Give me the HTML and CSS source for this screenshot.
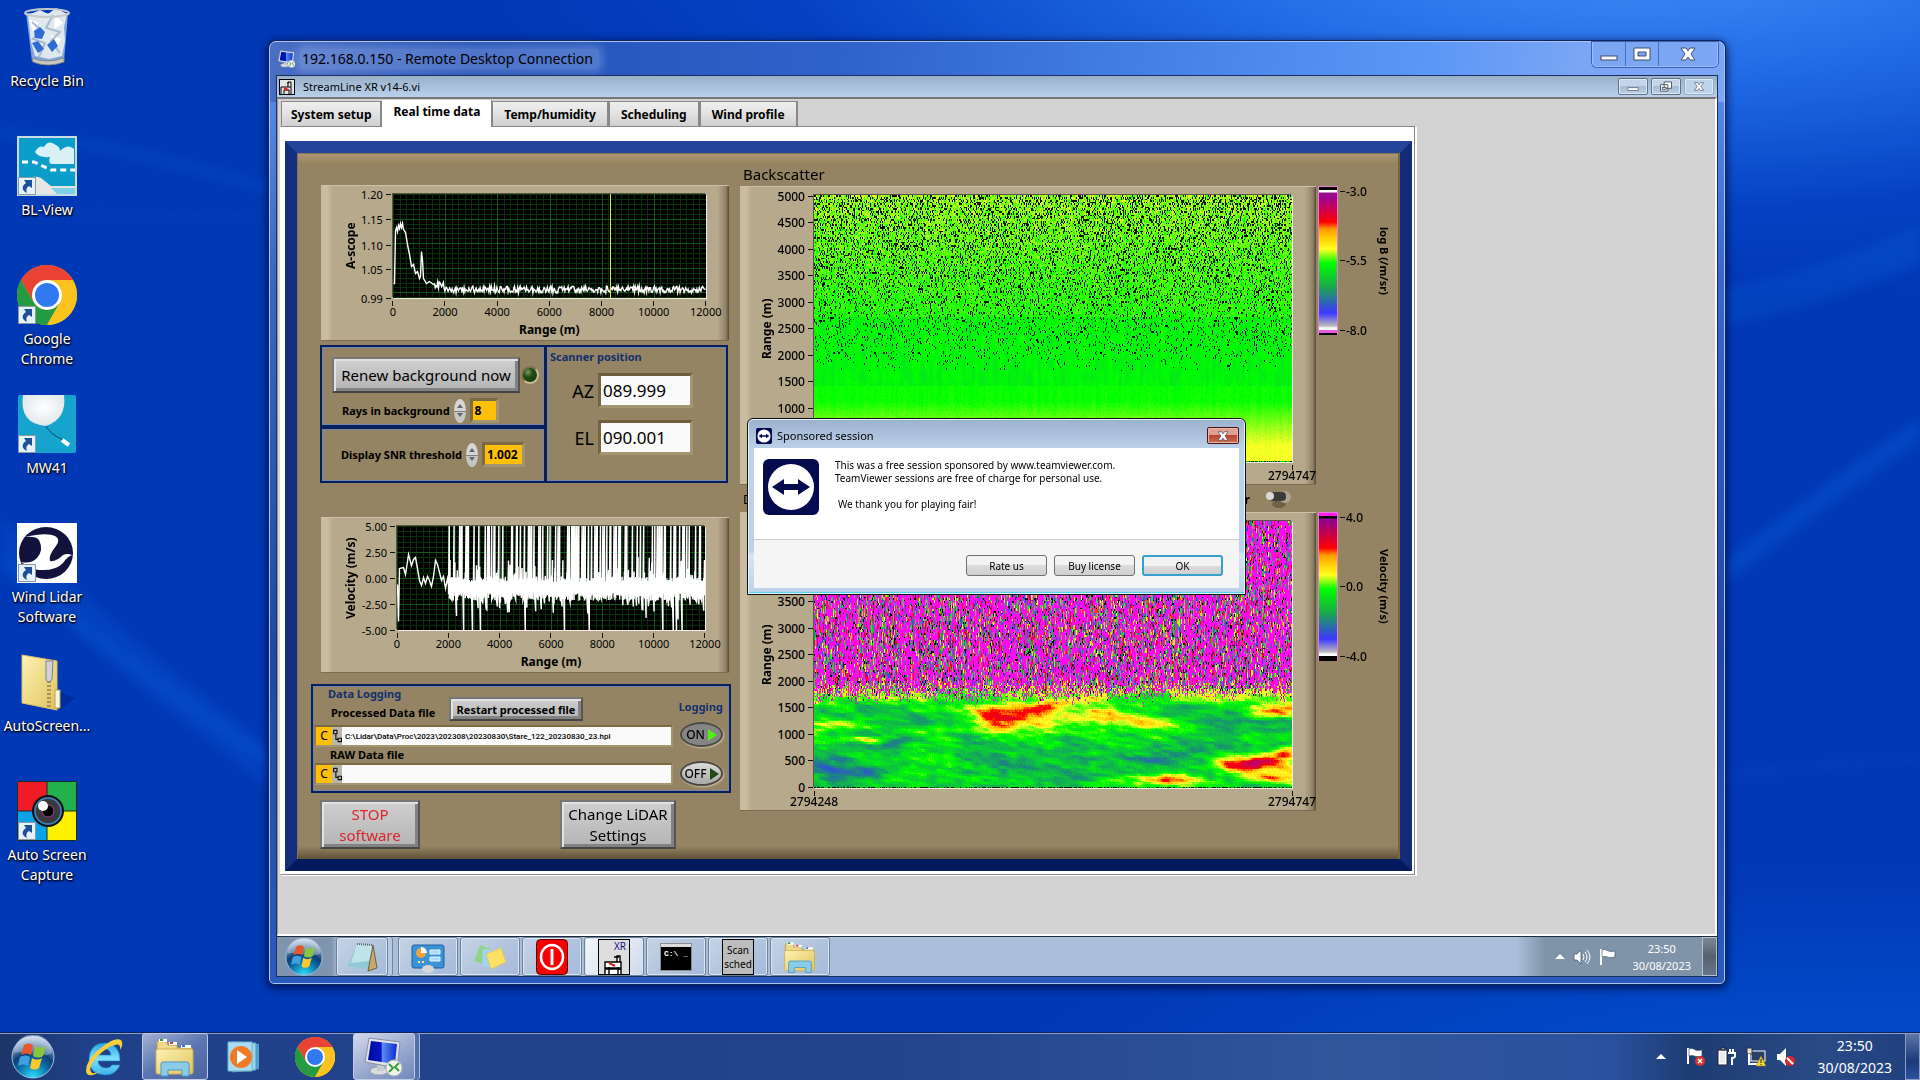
FILE: index.html
```html
<!DOCTYPE html>
<html lang="en">
<head>
<meta charset="utf-8">
<title>192.168.0.150 - Remote Desktop Connection</title>
<meta name="viewport" content="width=device-width, initial-scale=1">
<link rel="stylesheet" href="styles.css">
</head>
<body>
<svg class="defs" aria-hidden="true">
  <defs>
    <linearGradient id="folderFill" x1="0" y1="0" x2="1" y2="1"><stop offset="0" stop-color="#fdf3b4"/><stop offset="1" stop-color="#e0c25c"/></linearGradient>
    <radialGradient id="orbFill" cx=".5" cy="1" r="1"><stop offset="0" stop-color="#2fe3ff"/><stop offset=".4" stop-color="#0a6da8"/><stop offset=".6" stop-color="#0c3f78"/><stop offset="1" stop-color="#c9dcec"/></radialGradient>
    <linearGradient id="screenFill" x1="0" y1="0" x2="1" y2="0"><stop offset="0" stop-color="#000a9c"/><stop offset=".45" stop-color="#0417c4"/><stop offset=".5" stop-color="#5b8bf0"/><stop offset="1" stop-color="#0a2bd0"/></linearGradient>
    <radialGradient id="balloonFill" cx=".5" cy=".4" r=".6"><stop offset="0" stop-color="#fff"/><stop offset="1" stop-color="#dfe6ea"/></radialGradient>
    <linearGradient id="ieFill" x1="0" y1="0" x2="0" y2="1"><stop offset="0" stop-color="#2aa5e6"/><stop offset=".5" stop-color="#7fe0fb"/><stop offset="1" stop-color="#38b4ec"/></linearGradient>
  </defs>
  <symbol id="shortcut" viewBox="0 0 18 18">
    <rect x=".5" y=".5" width="17" height="17" fill="#e3f1f8" stroke="#8b98a6"/>
    <path d="M6 3h8v8l-3-2c-3 2-3 4-2 7-5-2-6-7-1-10z" fill="#1d4f96"/>
  </symbol>
  <symbol id="chrome" viewBox="0 0 60 60">
    <circle cx="30" cy="30" r="30" fill="#fbc116"/>
    <path d="M4 15A30 30 0 0 1 56 15H30L17 38z" fill="#ea4335"/>
    <path d="M4 15A30 30 0 0 0 30 60L43 37 17 38z" fill="#249a41"/>
    <path d="M56 15A30 30 0 0 1 30 60L43 38 44 20 30 15z" fill="#fcc31e"/>
    <circle cx="30" cy="30" r="15" fill="#fff"/><circle cx="30" cy="30" r="12" fill="#3079ee"/>
  </symbol>
  <symbol id="orb" viewBox="0 0 44 44">
    <circle cx="22" cy="22" r="21" fill="url(#orbFill)" stroke="#9fc0dc"/>
    <path d="M3 18a19 19 0 0 1 38 0c-10 6-26-3-38 0z" fill="#fff" opacity=".3"/>
    <path d="M13 10c3-2 6-2 9 0l-2 10c-3-2-6-2-10 0z" fill="#e8562a"/>
    <path d="M24 11c3 2 7 2 11 0l-3 10c-3 2-7 2-10 0z" fill="#8ac53e"/>
    <path d="M9 22c4-2 7-2 10 0l-2 9c-3-2-6-2-10 0z" fill="#3f9fe0"/>
    <path d="M21 23c3 2 7 2 10 0l-3 10c-3 2-6 2-9 0z" fill="#fbc72c"/>
  </symbol>
  <symbol id="explorer" viewBox="0 0 42 40">
    <path d="M3 4h9l2 4h8l2 3h14v8H3z" fill="#efd986" stroke="#b89b4a"/>
    <rect x="5" y="2" width="8" height="3" fill="#fff"/><rect x="6" y="2" width="3" height="2" fill="#2d9a3c"/>
    <rect x="15" y="5" width="8" height="3" fill="#fff"/><rect x="16" y="5" width="3" height="2" fill="#d9352a"/>
    <rect x="27" y="8" width="10" height="3" fill="#fff"/><rect x="28" y="8" width="3" height="2" fill="#2b7dc4"/>
    <rect x="2" y="12" width="37" height="25" rx="2" fill="url(#folderFill)" stroke="#cfae52"/>
    <path d="M7 39V27q0-2 2-2h24q2 0 2 2v12h-7v-6H14v6z" fill="#8ccbe8" stroke="#4a97c0"/>
  </symbol>
  <symbol id="rdp" viewBox="0 0 40 40">
    <ellipse cx="15" cy="34" rx="9" ry="4" fill="#d9dde2" stroke="#9aa0a8"/>
    <path d="M13 27h7l1 7h-8z" fill="#c6cbd2"/>
    <path d="M5 1 36 5 33 31 1 25z" fill="#dfe4ec" stroke="#8890a0"/>
    <path d="M7 4 33 7 31 27 4 23z" fill="url(#screenFill)"/>
    <circle cx="30" cy="31" r="8" fill="#f2f2ee" stroke="#b5b5ad"/>
    <path d="M25 27l4 4-4 4M35 26l-4 4 4 4" fill="none" stroke="#3c9b3c" stroke-width="2"/>
  </symbol>
  <symbol id="rig" viewBox="0 0 16 16">
    <rect x=".5" y=".5" width="15" height="15" fill="#e4e4e4" stroke="#000"/>
    <path d="M2 15V8h10v7M5 15v-4h5v4M9 8V3h3v5M8 4h2" fill="none" stroke="#000"/><path d="M5 9l4 2" stroke="#d22" stroke-width="2"/>
  </symbol>
  <symbol id="tv" viewBox="0 0 56 56">
    <rect width="56" height="56" rx="6" fill="#060b50"/><circle cx="28" cy="28" r="23" fill="#fff"/>
    <path d="M9 28l12-8v5h14v-5l12 8-12 8v-5H21v5z" fill="#060b50"/>
  </symbol>
  <symbol id="min" viewBox="0 0 18 14"><rect x="1" y="9" width="16" height="4" fill="#fff" stroke="#3f4d68"/></symbol>
  <symbol id="max" viewBox="0 0 18 14"><path d="M1 1h16v12H1zM5 5v4h8V5z" fill="#fff" fill-rule="evenodd" stroke="#3f4d68"/></symbol>
  <symbol id="close" viewBox="0 0 16 14"><path d="M1 1h5l2 3 2-3h5l-4 6 4 6h-5l-2-3-2 3H1l4-6z" fill="#fff" stroke="#46506a"/></symbol>
  <symbol id="restore" viewBox="0 0 14 12"><path d="M5 1h8v7H5zM1 4h8v7H1z" fill="#fff" stroke="#4b5666"/><rect x="3" y="7" width="4" height="2" fill="#fff" stroke="#4b5666"/></symbol>
  <symbol id="flag" viewBox="0 0 18 18"><path d="M2 1v16" stroke="#fff" stroke-width="2"/><path d="M3 2c5-2 5 3 13 1v6c-8 2-8-2-13 0z" fill="#fff" stroke="#38465a" stroke-width=".6"/></symbol>
</svg>

<div class="desktop">
  <main class="workspace">
    <svg class="streaks" viewBox="0 0 1920 1033" preserveAspectRatio="none" aria-hidden="true">
      <g fill="none" stroke="#0c62dc">
        <path d="M-20 520Q120 660 300 790" stroke-width="34" opacity=".24"/>
        <path d="M-20 545Q120 665 300 780" stroke-width="10" opacity=".25"/>
        <path d="M0 134Q120 142 290 196" stroke-width="12" opacity=".2"/>
        <path d="M60 212Q180 218 290 214" stroke-width="4" opacity=".25"/>
        <path d="M1710 310Q1820 290 1930 240" stroke-width="36" opacity=".25"/>
        <path d="M1700 592Q1820 500 1930 424" stroke-width="24" opacity=".2"/>
        <path d="M1700 590Q1820 496 1930 420" stroke-width="7" opacity=".35"/>
        <path d="M1710 779Q1820 765 1930 757" stroke-width="4" opacity=".3"/>
      </g>
    </svg>

    <nav class="shortcuts" aria-label="Desktop icons">
      <a href="#bin"><svg viewBox="0 0 60 60">
        <path d="M9 6 51 6 47 54Q30 62 15 54z" fill="#7fa5dd"/>
        <path d="M11 8l12-5 8 4 8-6 11 6-3 13 1 14-3 15-13 3-14-3-4-14z" fill="#dfe8ef"/>
        <path d="M12 12l10 4-6 9zM38 8l8 8-9 6zM34 28l10 4-6 12z" fill="#fff"/>
        <path d="M15 15l9 8-8 9 12 4-6 14M36 8l-7 13 14 4-9 9 9 12" fill="none" stroke="#a9bccb" stroke-width="2"/>
        <path d="M17 24l6-4 5 5-3 7-7-1zM30 38l7-6 4 7-6 6zM15 36l6-2 6 8-6 4z" fill="#2f6bd4"/>
        <path d="M15 51q15 6 32 0v4q-16 6-31 0z" fill="#c9c9c4" stroke="#85857e"/>
        <ellipse cx="30" cy="6" rx="22" ry="4" fill="none" stroke="#c5c9c9" stroke-width="2"/></svg>Recycle Bin</a>
      <a href="#blview"><svg viewBox="0 0 60 60">
        <rect width="60" height="60" fill="#c9dbe2"/><rect x="2" y="2" width="56" height="56" fill="#0a9dc9"/>
        <path d="M18 16q4-7 9-5 4-8 12-2 4 2 4 6 8-8 14-2v15H34q-3-2-1-7-12 1-15-5z" fill="#d9f1f4"/>
        <path d="M5 26h12l17 8h24" fill="none" stroke="#fff" stroke-width="3" stroke-dasharray="6 4"/>
        <path d="M2 46q14-8 22-4l10 8h24v8H2z" fill="#e6e6e4"/><path d="M34 52h24v6H40z" fill="#7fd2e6"/>
        <use href="#shortcut" x="1" y="41" width="18" height="18"/></svg>BL-View</a>
      <a href="#chrome-app"><svg viewBox="0 0 60 60"><use href="#chrome" width="60" height="60"/><use href="#shortcut" x="1" y="41" width="18" height="18"/></svg>Google Chrome</a>
      <a href="#mw41"><svg viewBox="0 0 60 60">
        <rect x="1" y="1" width="58" height="58" rx="2" fill="#16a3cd"/><path d="M6 1h41q3 24-18 31Q2 30 6 1z" fill="url(#balloonFill)"/>
        <path d="M29 32q4 8 17 14" fill="none" stroke="#0a4c66"/><path d="M45 46l7 5" stroke="#fff" stroke-width="4"/>
        <use href="#shortcut" x="1" y="41" width="18" height="18"/></svg>MW41</a>
      <a href="#lidar"><svg viewBox="0 0 60 60">
        <rect width="60" height="60" fill="#fff"/><ellipse cx="29" cy="30" rx="27" ry="26" fill="#12123c"/>
        <path d="M8 14q22-5 30-1 6 3 1 10-8 10-6 15 6 1 13-6 4-2 9 0-4 1-9 8-7 8-24 7-8-1-18-8 10 2 16-4 7-8 2-18-3-4-14-3z" fill="#fff"/>
        <use href="#shortcut" x="1" y="41" width="18" height="18"/></svg>Wind Lidar Software</a>
      <a href="#zip"><svg viewBox="0 0 60 60">
        <path d="M43 58 58 46 43 40z" fill="#02268a" opacity=".6"/>
        <path d="M5 3 40 9V58L5 51z" fill="url(#folderFill)" stroke="#d9c067"/><path d="M38 38l5 0v18h-5z" fill="#f5f5ea" stroke="#b9a24e"/>
        <path d="M32 9v47" stroke="#a8935a" stroke-width="4" stroke-dasharray="2 2"/><path d="M29 9h7l-1 18q-3 5-6 1z" fill="#cfd3d6" stroke="#7c8186"/></svg>AutoScreen...</a>
      <a href="#capture"><svg viewBox="0 0 60 60">
        <rect width="30" height="30" fill="#ee1c24"/><rect x="30" width="30" height="30" fill="#22b14c"/><rect y="30" width="30" height="30" fill="#0aa2e8"/><rect x="30" y="30" width="30" height="30" fill="#fff200"/>
        <path d="M.5.5h59v59H.5zM30 0v60M0 30h60" fill="none" stroke="#1d2b24"/>
        <circle cx="31" cy="30" r="15" fill="#3a3a3c" stroke="#111" stroke-width="2"/><circle cx="31" cy="30" r="13" fill="none" stroke="#3b86c8" stroke-width="1.5"/><circle cx="31" cy="30" r="6" fill="#000" stroke="#a33f9a"/><circle cx="26" cy="25" r="5" fill="#fff"/>
        <use href="#shortcut" x="1" y="41" width="18" height="18"/></svg>Auto Screen Capture</a>
    </nav>

    <section class="window" aria-label="Remote Desktop Connection">
      <header class="window-title">
        <svg class="title-icon" viewBox="0 0 40 40"><use href="#rdp"/></svg>
        <h1>192.168.0.150 - Remote Desktop Connection</h1>
        <div class="caption-buttons">
          <button type="button" aria-label="Minimize"><svg width="18" height="14"><use href="#min"/></svg></button>
          <button type="button" aria-label="Maximize"><svg width="18" height="14"><use href="#max"/></svg></button>
          <button type="button" class="wide" aria-label="Close"><svg width="16" height="14"><use href="#close"/></svg></button>
        </div>
      </header>

      <div class="remote">
        <header class="app-title">
          <svg width="16" height="16"><use href="#rig"/></svg>
          <h2>StreamLine XR v14-6.vi</h2>
          <div class="app-buttons">
            <button type="button" aria-label="Minimize"><svg width="12" height="9"><use href="#min"/></svg></button>
            <button type="button" aria-label="Restore"><svg width="14" height="11"><use href="#restore"/></svg></button>
            <button type="button" class="faded" aria-label="Close"><svg width="12" height="9"><use href="#close"/></svg></button>
          </div>
        </header>

        <div class="app-body">
          <div class="tab-control">
            <div class="tabs" role="tablist">
              <button type="button" role="tab">System setup</button>
              <button type="button" role="tab" aria-selected="true">Real time data</button>
              <button type="button" role="tab">Temp/humidity</button>
              <button type="button" role="tab">Scheduling</button>
              <button type="button" role="tab">Wind profile</button>
            </div>
            <div class="tab-page">
              <div class="panel">
                <div class="left-column">
                  <figure class="chart">
                    <figcaption class="y-label">A-scope</figcaption>
                    <ul class="y-axis y-ascope"><li>1.20</li><li>1.15</li><li>1.10</li><li>1.05</li><li>0.99</li></ul>
                    <canvas id="ascope" width="313" height="104"></canvas>
                    <ul class="x-axis"><li>0</li><li>2000</li><li>4000</li><li>6000</li><li>8000</li><li>10000</li><li>12000</li></ul>
                    <p class="x-label">Range (m)</p>
                  </figure>

                  <div class="scanner">
                    <div class="cell background-cell">
                      <div class="row"><button type="button" class="lv-button renew">Renew background now</button><span class="led"></span></div>
                      <div class="row field-row"><label for="rays">Rays in background</label><span class="spin"></span><input id="rays" class="lv-num rays" value="8"></div>
                    </div>
                    <div class="cell snr-cell">
                      <div class="row field-row"><label for="snr">Display SNR threshold</label><span class="spin"></span><input id="snr" class="lv-num snr" value="1.002"></div>
                    </div>
                    <div class="cell position-cell">
                      <h3>Scanner position</h3>
                      <div class="row"><label for="az">AZ</label><input id="az" class="lv-read" value="089.999" readonly></div>
                      <div class="row"><label for="el">EL</label><input id="el" class="lv-read" value="090.001" readonly></div>
                    </div>
                  </div>

                  <figure class="chart">
                    <figcaption class="y-label">Velocity (m/s)</figcaption>
                    <ul class="y-axis"><li>5.00</li><li>2.50</li><li>0.00</li><li>-2.50</li><li>-5.00</li></ul>
                    <canvas id="velocity" width="308" height="104"></canvas>
                    <ul class="x-axis"><li>0</li><li>2000</li><li>4000</li><li>6000</li><li>8000</li><li>10000</li><li>12000</li></ul>
                    <p class="x-label">Range (m)</p>
                  </figure>

                  <div class="logging">
                    <div class="log-files">
                      <h3>Data Logging</h3>
                      <label class="proc-label" for="proc">Processed Data file</label>
                      <button type="button" class="lv-button restart">Restart processed file</button>
                      <div class="path"><span class="drive">C</span><svg viewBox="0 0 8 16"><path d="M1 3h3v3H1zM5 10h3v3H5zM3 6v5h2" fill="none" stroke="#111"/></svg><input id="proc" value="C:\Lidar\Data\Proc\2023\202308\20230830\Stare_122_20230830_23.hpl"></div>
                      <label class="raw-label" for="raw">RAW Data file</label>
                      <div class="path"><span class="drive">C</span><svg viewBox="0 0 8 16"><path d="M1 3h3v3H1zM5 10h3v3H5zM3 6v5h2" fill="none" stroke="#111"/></svg><input id="raw" value=""></div>
                    </div>
                    <div class="log-switches">
                      <h3>Logging</h3>
                      <button type="button" class="oval on" aria-pressed="true">ON<i></i></button>
                      <button type="button" class="oval" aria-pressed="false">OFF<i></i></button>
                    </div>
                  </div>

                  <div class="actions">
                    <button type="button" class="lv-button stop">STOP<br>software</button>
                    <button type="button" class="lv-button change">Change LiDAR<br>Settings</button>
                  </div>
                </div>

                <div class="right-column">
                  <h3 class="map-title">Backscatter</h3>
                  <div class="map-row">
                    <figure class="chart map">
                      <figcaption class="y-label">Range (m)</figcaption>
                      <ul class="y-axis"><li>5000</li><li>4500</li><li>4000</li><li>3500</li><li>3000</li><li>2500</li><li>2000</li><li>1500</li><li>1000</li><li></li><li></li></ul>
                      <canvas id="backscatter" width="478" height="267"></canvas>
                      <ul class="x-axis"><li></li><li>2794747</li></ul>
                    </figure>
                    <div class="scale">
                      <div class="ramp ramp-b"></div>
                      <ul class="ramp-axis"><li>-3.0</li><li>-5.5</li><li>-8.0</li></ul>
                      <p>log B (/m/sr)</p>
                    </div>
                  </div>
                  <div class="map-title doppler"><span>D</span><span class="mode">r</span>
                    <svg width="28" height="18" viewBox="0 0 28 18"><ellipse cx="15" cy="14" rx="7" ry="4" fill="#6f6248"/><circle cx="21" cy="7" r="6" fill="#aaa598"/><rect x="5" y="2" width="17" height="9" rx="4" fill="#3b3b39"/><circle cx="6" cy="6" r="4" fill="#d9d9d5"/></svg>
                  </div>
                  <div class="map-row">
                    <figure class="chart map">
                      <figcaption class="y-label">Range (m)</figcaption>
                      <ul class="y-axis"><li></li><li></li><li></li><li>3500</li><li>3000</li><li>2500</li><li>2000</li><li>1500</li><li>1000</li><li>500</li><li>0</li></ul>
                      <canvas id="doppler" width="478" height="267"></canvas>
                      <ul class="x-axis"><li>2794248</li><li>2794747</li></ul>
                    </figure>
                    <div class="scale">
                      <div class="ramp ramp-v"></div>
                      <ul class="ramp-axis"><li>4.0</li><li>0.0</li><li>-4.0</li></ul>
                      <p>Velocity (m/s)</p>
                    </div>
                  </div>
                </div>
              </div>
            </div>
          </div>
        </div>

        <footer class="remote-taskbar">
          <button type="button" class="start" aria-label="Start"><svg width="38" height="38"><use href="#orb"/></svg></button>
          <button type="button" class="task stacked" aria-label="Notepad"><svg width="32" height="32" viewBox="0 0 32 32"><path d="M11 3 27 4 22 28 2 25z" fill="#8fcbd6"/><path d="M11 3 27 4 23 20 5 22z" fill="#bfe4ea"/><path d="M27 4 31 27 22 30z" fill="#c7a96a" stroke="#6d6040"/><path d="M11 3 27 4" stroke="#666" stroke-width="2" stroke-dasharray="1 1"/></svg></button>
          <button type="button" class="task" aria-label="Control Panel"><svg width="34" height="32" viewBox="0 0 34 32"><rect x="1" y="4" width="32" height="23" rx="2" fill="#3a92d8" stroke="#1f5e9e"/><circle cx="10" cy="12" r="5" fill="#f5a13a"/><path d="M10 12V6a6 6 0 0 1 6 6z" fill="#fff"/><path d="M19 9h10v4H19zM19 16h10v4H19z" fill="#a6dbf7" stroke="#e8f6ff"/><path d="M7 21h8" stroke="#ffe27a" stroke-width="2" stroke-dasharray="2 2"/><ellipse cx="17" cy="28" rx="6" ry="4" fill="#d5d8da"/></svg></button>
          <button type="button" class="task" aria-label="Sticky Notes"><svg width="34" height="32" viewBox="0 0 34 32"><path d="M7 4 20 9 14 24 1 20z" fill="#8fd488"/><path d="M10 8 22 9 22 26 9 25z" fill="#a6d3f3"/><path d="M13 13 28 7 33 21 18 28z" fill="#fbe063" stroke="#e0c040" stroke-width=".6"/></svg></button>
          <button type="button" class="task" aria-label="Shutdown tool"><svg width="32" height="36" viewBox="0 0 32 36"><rect x=".5" y=".5" width="31" height="35" rx="4" fill="#f40000" stroke="#5c0000"/><ellipse cx="16" cy="18" rx="11" ry="12" fill="none" stroke="#fff" stroke-width="2.5"/><path d="M16 10v16" stroke="#fff" stroke-width="3"/></svg></button>
          <button type="button" class="task active" aria-label="StreamLine XR"><svg width="32" height="36" viewBox="0 0 32 36"><rect x=".5" y=".5" width="31" height="35" fill="#dedede" stroke="#000"/><text x="16" y="11" class="xr">XR</text><path d="M7 35v-6h16v6M7 23h16v7H7zM19 23v-6h3v6M16 18h5M11 35v-7M20 35v-7" fill="#fff" stroke="#000" stroke-width="1.4"/><path d="M11 24l6 3" stroke="#d22" stroke-width="2"/></svg></button>
          <button type="button" class="task" aria-label="Command Prompt"><svg width="32" height="28" viewBox="0 0 32 28"><rect x=".5" y=".5" width="31" height="27" fill="#000" stroke="#8d8d8d"/><rect x="1" y="1" width="30" height="3" fill="#dcdcdc"/><text x="4" y="13" class="prompt">C:\ _</text></svg></button>
          <button type="button" class="task" aria-label="Scan schedule"><span class="scan">Scan<br>sched</span></button>
          <button type="button" class="task" aria-label="Explorer"><svg width="34" height="34"><use href="#explorer"/></svg></button>
          <div class="tray">
            <svg width="10" height="6" viewBox="0 0 10 6"><path d="M5 0l5 5H0z" fill="#fff"/></svg>
            <svg width="18" height="16" viewBox="0 0 18 16"><path d="M1 5h3l4-4v14l-4-4H1z" fill="#fff" stroke="#4a5a6c" stroke-width=".8"/><path d="M10 5q2 3 0 6M12 3q4 5 0 10M14 1q6 7 0 14" fill="none" stroke="#fff"/></svg>
            <svg width="18" height="18"><use href="#flag"/></svg>
            <time datetime="2023-08-30T23:50">23:50<br>30/08/2023</time>
            <button type="button" class="peek" aria-label="Show desktop"></button>
          </div>
        </footer>

        <section class="dialog" role="dialog" aria-label="Sponsored session">
          <header>
            <svg width="16" height="16"><use href="#tv"/></svg>
            <h2>Sponsored session</h2>
            <button type="button" class="dialog-close" aria-label="Close"><svg width="12" height="10"><use href="#close"/></svg></button>
          </header>
          <div class="dialog-content">
            <div class="dialog-message">
              <svg width="56" height="56"><use href="#tv"/></svg>
              <div><p>This was a free session sponsored by www.teamviewer.com.<br>TeamViewer sessions are free of charge for personal use.</p><p class="thanks">We thank you for playing fair!</p></div>
            </div>
            <div class="dialog-buttons">
              <button type="button">Rate us</button><button type="button">Buy license</button><button type="button" class="default">OK</button>
            </div>
          </div>
        </section>
      </div>
    </section>
  </main>

  <footer class="taskbar">
    <button type="button" class="start" aria-label="Start"><svg width="44" height="44"><use href="#orb"/></svg></button>
    <button type="button" class="task ie" aria-label="Internet Explorer"><svg width="40" height="40" viewBox="0 0 40 40"><path d="M36 24H14q1 7 8 7 4 0 6-3h8q-4 10-15 10Q5 37 5 22 6 6 21 6q15 1 15 18zM14 18h13q-1-6-6-6-6 0-7 6z" fill="url(#ieFill)" stroke="#1b86c9" stroke-width=".6"/><path d="M3 37Q-1 29 12 15 30-1 37 3q3 4-1 10 1-7-5-5Q22 10 12 21 3 32 8 36q4 1 9-3-9 8-14 4z" fill="#f6cf3a"/></svg></button>
    <button type="button" class="task open" aria-label="File Explorer"><svg width="42" height="40"><use href="#explorer"/></svg></button>
    <button type="button" class="task media" aria-label="Media Player"><svg width="34" height="34" viewBox="0 0 34 34"><path d="M8 2l24 2v25l-24 3z" fill="#4fa4cc"/><path d="M5 2l24 1v27l-24 2z" fill="#9bd5ec" stroke="#4a95bb"/><path d="M1 2h24v29H1z" fill="#a9dcf0" stroke="#6db3d2"/><circle cx="14" cy="17" r="11" fill="#f07a26"/><path d="M10 10v14l10-7z" fill="#fff"/></svg></button>
    <button type="button" class="task browser" aria-label="Chrome"><svg width="40" height="40"><use href="#chrome"/></svg></button>
    <button type="button" class="task open bright" aria-label="Remote Desktop"><svg width="40" height="40"><use href="#rdp"/></svg></button>
    <div class="tray">
      <svg width="10" height="6" viewBox="0 0 10 6"><path d="M5 0l5 5H0z" fill="#fff"/></svg>
      <svg width="20" height="20" viewBox="0 0 20 20"><use href="#flag" width="18" height="18"/><circle cx="14" cy="14" r="5" fill="#d8352c"/><path d="M12 12l4 4M16 12l-4 4" stroke="#fff" stroke-width="1.5"/></svg>
      <svg width="20" height="20" viewBox="0 0 20 20"><path d="M2 3h9v15H2zM5 1h4v2H5z" fill="#fff" stroke="#223"/><rect x="4" y="5" width="5" height="11" fill="#e8ecf2"/><path d="M12 6h7v3q0 2-3 2v7M14 6V2M17 6V2" fill="none" stroke="#fff" stroke-width="2"/></svg>
      <svg width="20" height="20" viewBox="0 0 20 20"><rect x="5" y="4" width="14" height="10" fill="#2a3f66" stroke="#fff"/><path d="M1 1h5v6H1z" fill="#ddd" stroke="#333"/><path d="M3 7v10h9" fill="none" stroke="#fff" stroke-width="2"/><path d="M15 9l5 10H10z" fill="#f7d928" stroke="#8c7a10" stroke-width=".5"/><path d="M15 12v4M15 17v1" stroke="#222"/></svg>
      <svg width="20" height="20" viewBox="0 0 20 20"><path d="M1 7h3l6-6v18l-6-6H1z" fill="#fff"/><circle cx="14" cy="14" r="5" fill="#d8252c"/><path d="M11 11l6 6" stroke="#fff" stroke-width="2"/></svg>
      <time datetime="2023-08-30T23:50">23:50<br>30/08/2023</time>
      <button type="button" class="peek" aria-label="Show desktop"></button>
    </div>
  </footer>
</div>
<script src="plots.js"></script>
</body>
</html>
```
FILE: styles.css
```css
* { box-sizing: border-box; margin: 0; padding: 0; }
body { font-family: "Noto Sans", "Open Sans", sans-serif; font-size: 12px; color: #000; background: #0138b5; overflow: hidden; }
button, input { font: inherit; color: inherit; border: 0; border-radius: 0; background: none; min-width: 0; }
ul { list-style: none; }
h1, h2, h3 { font-weight: 400; font-size: 12px; }
svg { display: block; flex: none; }
.defs { position: absolute; width: 0; height: 0; }

.desktop {
  min-height: 100vh; display: flex; flex-direction: column;
  background:
    radial-gradient(ellipse 60% 34% at 85% -6%, rgba(74, 152, 255, .95), rgba(40, 118, 240, .8) 40%, rgba(10, 80, 215, .4) 75%, transparent),
    radial-gradient(ellipse 45% 24% at 96% 104%, #0354d4, transparent),
    #0138b5;
}
.workspace { position: relative; flex: 1; display: flex; }
.streaks { position: absolute; inset: 0; width: 100%; height: 100%; filter: blur(6px); }

/* Desktop icons */
.shortcuts { position: relative; display: grid; grid-auto-rows: 129px; width: 94px; padding-top: 7px; }
.shortcuts a { display: flex; flex-direction: column; align-items: center; gap: 4px; padding: 0 2px; font-size: 14px; line-height: 20px; color: #fff; text-align: center; text-decoration: none; text-shadow: 1px 1px 2px #000, 0 1px 2px #001; }
.shortcuts svg { width: 60px; height: 60px; }

/* Remote desktop window */
.window {
  position: absolute; inset: 41px 195px 48px 269px; display: flex; flex-direction: column;
  padding: 0 6px 6px; border: 1px solid #a9c3f5; border-radius: 7px 7px 5px 5px;
  background: linear-gradient(100deg, #4a6fc4 0, #2352b5 14%, #2f63cc 40%, #4583e8 62%, #5c98f6 80%, #7ba6f4 90%) top / 100% 60px no-repeat, linear-gradient(#5f93ee, #3768c8 25%, #2148a6 65%, #2a5bbf);
  box-shadow: 0 0 0 1px #10245c, 0 2px 9px 2px rgba(0, 8, 60, .75);
}
.window-title { display: flex; align-items: center; height: 33px; padding-left: 2px; flex: none; }
.title-icon { width: 18px; height: 18px; }
.window-title h1 { font-size: 14px; line-height: 20px; margin-left: 4px; padding: 0 6px 0 2px; background: rgba(190, 210, 250, .28); box-shadow: 0 0 8px 4px rgba(190, 210, 250, .28); border-radius: 4px; }
.caption-buttons { display: flex; align-self: flex-start; margin-left: auto; height: 25px; border: 1px solid #9dbdf7; border-top: 0; border-radius: 0 0 5px 5px; box-shadow: 0 0 0 1px #3d62b4; }
.caption-buttons button { width: 33px; display: grid; place-items: center; border-right: 1px solid #4a70c4; }
.caption-buttons .wide { width: 58px; border: 0; }
.remote { position: relative; flex: 1; min-height: 0; display: flex; flex-direction: column; background: #d3d3d3; border: 1px solid #1b2f5c; }
.app-title { display: flex; align-items: center; gap: 8px; height: 21px; flex: none; padding: 0 3px 0 2px; background: linear-gradient(#9ab0ca, #b9d0ea); }
.app-title h2 { font-size: 11px; }
.app-buttons { display: flex; gap: 3px; margin-left: auto; }
.app-buttons button { width: 30px; height: 17px; display: grid; place-items: center; border: 1px solid #5f7388; border-radius: 2px; background: linear-gradient(#c3d5e8 50%, #a5bcd4 50%, #bcd1e6); box-shadow: inset 0 0 0 1px #dce8f4; }
.app-buttons .faded { border-color: #93acc4; background: #bcd3ea; }

.app-body { flex: 1; min-height: 0; overflow: hidden; padding: 1px 2px; border: solid #fff; border-width: 0 2px 2px 0; border-top: 2px solid #777; border-left: 1px solid #999; }
.tab-control { width: max-content; }
.tabs { display: flex; align-items: flex-end; height: 26px; padding-left: 1px; }
.tabs button { height: 25px; padding: 0 9px; font-size: 12px; font-weight: 700; white-space: nowrap; border: 1px solid #888; border-width: 1px 2px 0 1px; background: linear-gradient(#efefef, #e2e2e2 50%, #cfcfcf); }
.tabs [aria-selected] ~ button { padding: 0 11px; }
.tabs [aria-selected] { position: relative; height: 27px; padding: 0 11px 4px; border-width: 0 1px 0 0; background: #fff; margin-bottom: -1px; }
.tab-page { padding: 14px 2px 3px 4px; border: 1px solid #888; border-left-color: #fff; background: #fff; box-shadow: 2px 1px 0 #fff; }
.panel {
  display: grid; grid-template-columns: 420px 660px; gap: 9px;
  border: 12px solid; border-color: #24439a #142c78 #041a5c #152f80; padding: 0 0 10px 14px;
  background: linear-gradient(#ad9671, #94835f 12px, transparent 13px), linear-gradient(0deg, #5e5138, #918160 12px, transparent 13px), #948463;
  box-shadow: inset 1px 1px 0 #84745a, inset -2px 0 0 #776645;
}
.left-column { padding-top: 32px; }

/* Charts */
.chart {
  display: grid; grid-template-columns: 20px 1fr auto; grid-template-rows: 104px 22px 20px;
  width: 408px; height: 156px; margin-left: 10px; padding: 8px 24px 0 20px;
  border-top: 1px solid #cdc0a4; border-bottom: 1px solid #7c6d50;
  background: linear-gradient(90deg, #c9bb9e, #cbbd9f 6px, transparent 12px), linear-gradient(270deg, #54493a, #8e8064 3px, #a79a7e 8px, transparent 12px), #b6a98c;
}
.chart canvas { display: block; grid-area: 1 / 3; box-shadow: 1px 1px 0 #f3ede0, -1px -1px 0 #5b5544; }
.y-label, .scale p { writing-mode: vertical-rl; font-weight: 700; text-align: center; line-height: 20px; white-space: nowrap; }
.y-label { grid-area: 1 / 1; transform: rotate(180deg); }
.y-axis { grid-area: 1 / 2; display: grid; align-content: space-between; justify-content: end; padding-right: 2px; font-size: 11px; }
.y-axis li, .ramp-axis li { height: 0; display: flex; align-items: center; justify-content: flex-end; gap: 3px; white-space: nowrap; }
.y-axis li::after, .ramp-axis li::before { content: ""; width: 5px; height: 1px; background: #111; }
.y-axis li:empty::after { background: none; }
.y-ascope { grid-template-rows: 25px 25px 24px 28px 0; }
.x-axis { grid-area: 2 / 3; display: flex; justify-content: space-between; padding-top: 3px; font-size: 11px; line-height: 12px; }
.x-axis li { width: 0; display: flex; flex-direction: column; align-items: center; }
.x-axis li::before { content: ""; flex: none; width: 1px; height: 5px; background: #111; }
.x-label { grid-area: 3 / 3; text-align: center; font-weight: 700; line-height: 20px; }

/* Background and scanner controls */
.scanner { display: grid; grid-template: 82px 56px / 226px 182px; margin: 4px 0 34px 9px; }
.cell { border: 2px solid #06205e; outline: 1px solid #7385ab; outline-offset: -3px; padding: 3px; }
.position-cell { grid-area: 1 / 2 / 3 / 3; border-left-width: 1px; }
.row { display: flex; align-items: center; }
.background-cell .row:first-child { padding: 7px 0 0 7px; gap: 1px; }
.field-row { gap: 4px; font-weight: 700; padding: 5px 0 0 17px; }
.field-row label { font-size: 11px; }
.snr-cell .field-row { padding: 10px 0 0 16px; }
.lv-button { border: 2px solid; border-color: #777 #555 #444 #777; background: linear-gradient(#cfcfcf, #b4b4b4); box-shadow: inset 2px 2px 0 #e2e2e2, inset -3px -3px 0 #828282; white-space: nowrap; }
.renew { width: 188px; height: 36px; font-size: 15px; }
.led { width: 18px; height: 18px; border-radius: 50%; border: 2px solid #7e6f4e; border-right-color: #cbbd9c; border-bottom-color: #cbbd9c; background: radial-gradient(circle at 35% 30%, #7d9a6c, #1f4f10 35%, #10330a); }
.spin { width: 12px; height: 24px; border-radius: 50%; background: linear-gradient(#d6d6d6 48%, #777 49%, #777 52%, #c6c6c6 53%); display: grid; justify-items: center; align-content: space-evenly; }
.spin::before { content: ""; border: 3px solid transparent; border-top: 0; border-bottom: 4px solid #666; }
.spin::after { content: ""; border: 3px solid transparent; border-bottom: 0; border-top: 4px solid #666; }
.lv-num { height: 25px; padding: 0 2px; border: 3px solid; border-color: #7c6a42 #a39570 #a39570 #7c6a42; background: #fdbf08; font-weight: 700; }
.rays { width: 29px; }
.snr { width: 43px; }
.position-cell h3, .logging h3 { font-weight: 700; font-size: 11px; color: #12306f; line-height: 14px; }
.position-cell .row { justify-content: flex-end; gap: 4px; padding-right: 30px; font-size: 18px; }
.position-cell h3 + .row { margin: 9px 0 12px; }
.lv-read { width: 95px; height: 35px; padding: 0 2px; font-size: 17px; background: #fafafa; border: 3px solid; border-color: #6f5e3c #a39570 #a39570 #75653f; }

/* Logging */
.logging { display: grid; grid-template-columns: 1fr 50px; height: 109px; margin-top: 11px; border: 2px solid #06205e; outline: 1px solid #7385ab; outline-offset: -3px; padding: 1px 6px 0 1px; }
.log-files { display: grid; grid-template: 14px 24px 22px 16px 22px / 130px 1fr; }
.log-files h3 { padding-left: 14px; }
.log-files label, .restart { font-size: 11px; font-weight: 700; white-space: nowrap; }
.proc-label { grid-area: 2 / 1; padding-left: 17px; line-height: 24px; }
.raw-label { grid-area: 4 / 1; padding-left: 16px; line-height: 16px; }
.restart { grid-area: 1 / 2 / 3 / 3; align-self: end; justify-self: start; width: 134px; height: 24px; margin: 0 0 4px 5px; }
.path { grid-column: 1 / 3; display: flex; border: 2px solid; border-color: #7c6a42 #a39570 #a39570 #8d7c55; }
.drive { width: 16px; background: #fdbf08; text-align: center; line-height: 18px; }
.path svg { width: 10px; height: 18px; background: #bbb7ab; }
.path input { flex: 1; background: #fafafa; font-family: Roboto, "Noto Sans", sans-serif; font-size: 8px; font-weight: 500; padding-left: 3px; }
.log-switches { padding-top: 13px; display: flex; flex-direction: column; align-items: flex-end; }
.oval { display: flex; align-items: center; justify-content: center; gap: 3px; width: 43px; height: 25px; border-radius: 50%; font-weight: 500; background: linear-gradient(#dcdcdc, #a9a9a9); border: 2px solid #4c4a44; box-shadow: 1px 1px 2px #cdbf9f; }
.oval.on { background: #858585; margin: 8px 0 14px; }
.oval i { border: 6px solid transparent; border-left: 9px solid #1e4b12; border-right: 0; }
.oval.on i { border-left-color: #4df212; }
.actions { display: flex; justify-content: space-between; margin: 7px 55px 0 9px; }
.actions button { height: 49px; font-size: 15px; line-height: 21px; }
.stop { width: 100px; color: #d8272b; }
.change { width: 116px; }

/* Heat maps */
.map-title { height: 33px; padding: 9px 0 0 3px; font-size: 15px; line-height: 24px; }
.map-row { display: flex; gap: 2px; }
.map { width: 576px; height: 299px; margin: 0; padding: 8px 24px 0 17px; grid-template-rows: 267px 22px; }
.map .y-axis, .map .x-axis, .ramp-axis { font-size: 12px; font-weight: 500; }
.map .y-axis { padding: 1px 1px 1px 0; }
.doppler { display: flex; align-items: center; height: 27px; padding: 0 0 0 3px; font-size: 13px; }
.doppler .mode { margin-left: auto; font-weight: 700; }
.doppler svg { margin: 0 108px 0 14px; }
.scale { display: grid; grid-template-columns: 20px 32px 20px; gap: 2px; height: 149px; }
.ramp { border: 1px solid #e67ad8; border-width: 1px 1px 0; }
.ramp-b { background: linear-gradient(#000 3px, #fff 3px 5px, #90108c 6px, #a6008c 12px, #f00 35px, #ff9a00 42px, #ffc800 50px, #ffff20 62px, #0f0 76px, #1aa84a 100px, #3a38ff 126px, #bbb 139px, #fff 141px 143px, #e85adc 143px 146px, #000 146px); }
.ramp-v { background: linear-gradient(#ff20f0 3px, #000 3px 5px, #8a0090 6px, #f00 35px, #ff9a00 42px, #ffc800 50px, #ffff20 62px, #0f0 76px, #1aa84a 100px, #3a38ff 126px, #bbb 139px, #fff 141px 143px, #000 143px); }
.ramp-axis { display: grid; align-content: space-between; justify-content: start; padding: 5px 0; }
.ramp-axis li { gap: 1px; justify-content: flex-start; }
.scale p { align-self: center; font-size: 11px; }

/* Dialog over the remote session */
.dialog { position: absolute; left: 470px; top: 342px; width: 499px; height: 177px; display: flex; flex-direction: column; padding: 0 6px 6px; border: 1px solid #111; border-radius: 6px 6px 0 0; background: linear-gradient(#9ab0cc, #bcd2ea 30px, #bcd2ea 75%, #d6e5f4 78%, #b9d1ea); box-shadow: inset 0 0 0 1px #e6f2fc, inset 0 -2px 0 #55d0ee; font-size: 11px; }
.dialog header { display: flex; align-items: center; gap: 5px; height: 29px; padding: 4px 0 0 2px; }
.dialog h2 { font-size: 11px; }
.dialog-close { display: grid; place-items: center; width: 32px; height: 17px; margin-left: auto; border: 1px solid #4b1410; border-radius: 2px; background: linear-gradient(#e0a094 45%, #bb4330 50%, #cf6e52); box-shadow: inset 0 0 0 1px #e9b8ac; }
.dialog-content { flex: 1; display: flex; flex-direction: column; }
.dialog-message { flex: 1; display: flex; gap: 16px; padding: 11px 9px 0; background: #fff; }
.dialog-message p { line-height: 13px; font-size: 10px; }
.dialog-message .thanks { margin: 13px 0 0 3px; }
.dialog-buttons { display: flex; justify-content: flex-end; gap: 7px; padding: 15px 16px 12px; background: #f5f5f5; border-top: 1px solid #ccc; }
.dialog-buttons button { width: 81px; height: 21px; font-size: 10px; border: 1px solid #707070; border-radius: 3px; background: linear-gradient(#f3f3f3 50%, #dcdcdc 50%, #cfcfcf); }
.dialog-buttons .default { border: 2px solid #38a0cc; }

/* Taskbars */
.remote-taskbar { display: flex; height: 40px; flex: none; border-top: 1px solid #1d2b3b; background: linear-gradient(90deg, #7f95ad 54px, #a9bfda 62px); }
.start { display: grid; place-items: center; }
.remote-taskbar .start { width: 54px; margin-right: 5px; }
.remote-taskbar .task { display: grid; place-items: center; width: 60px; margin-right: 2px; border: 1px solid #6c8099; border-radius: 3px; background: linear-gradient(135deg, #c5d3e6, #b3c6de 50%, #a5badb); box-shadow: inset 0 0 0 1px #dbe7f4; }
.remote-taskbar .stacked { width: 52px; margin-right: 10px; box-shadow: inset 0 0 0 1px #dbe7f4, 4px 0 0 #b7cae0, 5px 0 0 #7388a0; }
.remote-taskbar .active { background: linear-gradient(135deg, #f4f7fb, #cfdaea); }
.xr { font: 10px "Noto Sans", sans-serif; fill: #12128c; }
.prompt { font: 700 8px "Liberation Mono", monospace; fill: #fff; }
.scan { width: 32px; height: 36px; border: 1px solid #000; background: #bdbdbd; font-size: 10px; line-height: 14px; padding-top: 3px; }
.tray { display: flex; align-items: center; margin-left: auto; color: #fff; text-align: center; }
.remote-taskbar .tray { gap: 8px; padding-left: 38px; background: linear-gradient(90deg, rgba(127, 148, 168, 0), #7f94a8 28px); }
.remote-taskbar time { font-size: 11px; line-height: 17px; margin: 0 7px; }
.peek { align-self: stretch; width: 15px; border: 1px solid #b4c2d0; background: linear-gradient(#7b8794, #55626f 50%, #66748a); }
.remote-taskbar .peek { margin-left: -4px; }
.taskbar { position: relative; display: flex; height: 48px; border-top: 1px solid #10225a; box-shadow: inset 0 1px 0 #8ba0cc; background: linear-gradient(90deg, #1c3568, #20418a 90px, #23438c 45%, #30569c 70%, #2a519e 84%, #1d3c72 88%, #2a4a86 95%, #1e3f7d); }
.taskbar .start { width: 66px; margin-right: 5px; }
.taskbar .task { display: grid; place-items: center; width: 66px; margin-right: 3px; }
.taskbar .ie, .taskbar .media, .taskbar .browser { margin-right: 5px; }
.taskbar .open { border: 1px solid #c0cce6; border-radius: 3px; background: linear-gradient(150deg, #a3b1d3, #5b76b0 50%, #49659f); }
.taskbar .bright { width: 62px; background: linear-gradient(150deg, #d2d8ea, #93a5cc 60%, #7189bb); box-shadow: 4px 0 0 #546ea8, 5px 0 0 #a9b8da; }
.taskbar .tray { gap: 10px; }
.taskbar .tray svg:first-child { margin-right: 10px; }
.taskbar time { font-size: 14px; line-height: 22px; margin: 0 3px 0 12px; }
.taskbar .peek { border-color: #8a9fc8; background: linear-gradient(#5d76a6, #1c3a78 60%, #2b51a0); }
```
FILE: plots.js
```js
// Seeded generator, so that every load draws the same data.
function generator(seed) {
  return function () {
    seed = (seed + 0x6d2b79f5) | 0;
    let t = Math.imul(seed ^ (seed >>> 15), 1 | seed);
    t = (t + Math.imul(t ^ (t >>> 7), 61 | t)) ^ t;
    return ((t ^ (t >>> 14)) >>> 0) / 4294967296;
  };
}

function lattice(seed) {
  const rnd = generator(seed);
  const table = Array.from({ length: 4096 }, rnd);
  const at = (x, y) => table[(x * 57 + y * 131) & 4095];
  return (x, y) => {
    const xi = Math.floor(x), yi = Math.floor(y);
    let u = x - xi, v = y - yi;
    u = u * u * (3 - 2 * u);
    v = v * v * (3 - 2 * v);
    const top = at(xi, yi) * (1 - u) + at(xi + 1, yi) * u;
    const low = at(xi, yi + 1) * (1 - u) + at(xi + 1, yi + 1) * u;
    return top * (1 - v) + low * v;
  };
}

const RAMP = [
  [-4, 200, 200, 200], [-3, 58, 56, 255], [-1.6, 26, 140, 120], [0, 0, 255, 0],
  [0.9, 255, 255, 40], [1.6, 255, 195, 0], [2.3, 255, 0, 0], [4, 160, 0, 150]
];

function colour(v) {
  if (v > 4) return [255, 20, 240];
  for (let i = 1; i < RAMP.length; i++) {
    if (v <= RAMP[i][0]) {
      const a = RAMP[i - 1], b = RAMP[i];
      const t = Math.max(0, (v - a[0]) / (b[0] - a[0]));
      return [1, 2, 3].map(k => a[k] + (b[k] - a[k]) * t);
    }
  }
  return [160, 0, 150];
}

function paint(id, cell) {
  const canvas = document.getElementById(id);
  const ctx = canvas.getContext("2d");
  const img = ctx.createImageData(canvas.width, canvas.height);
  const rows = Math.ceil(canvas.height / 1.6);
  const columns = canvas.width;
  const grid = [];
  for (let r = 0; r <= rows; r++) {
    grid.push([]);
    for (let x = 0; x < columns; x++) grid[r].push(cell(x, r * 1.6));
  }
  for (let y = 0; y < canvas.height; y++) {
    for (let x = 0; x < columns; x++) {
      const c = grid[Math.floor(y / 1.6)][x];
      img.data.set([c[0], c[1], c[2], 255], (y * columns + x) * 4);
    }
  }
  ctx.putImageData(img, 0, 0);
}

const black = [0, 20, 0];

function drawBackscatter() {
  const rnd = generator(7), n = lattice(3);
  paint("backscatter", (x, y) => {
    const high = Math.max(0, 1 - y / 175);
    if (y > 264) return rnd() < 0.5 ? black : [0, 220, 0];
    if (rnd() < 0.27 * Math.pow(high, 0.6)) return black;
    let v = 0.02 + 0.5 * Math.pow(high, 1.5) + (rnd() - 0.5) * (0.12 + 0.7 * high) + (n(x / 2, y / 40) - 0.5) * 0.1;
    if (y > 120 && y < 190) v -= 0.35 * n(x / 3, y / 12);
    if (y > 205) v += Math.min(0.85, (y - 205) / 52);
    return colour(v);
  });
}

// centre x, centre y, radius x, radius y, slope, strength
const BLOBS = [
  [200, 198, 40, 14, -0.05, 2.6], [170, 190, 14, 8, 0, 1.2], [235, 185, 50, 6, -0.2, 1.3], [295, 195, 60, 13, 0.05, 1.6],
  [335, 200, 30, 7, 0.05, 1.4], [8, 202, 28, 6, 0, 1.5], [40, 217, 30, 4, 0.05, 1.1], [120, 208, 22, 4, 0, 1.1],
  [430, 243, 34, 8, 0, 3.4], [470, 232, 34, 7, -0.3, 2.1], [455, 256, 24, 5, 0.1, 1.9], [475, 246, 20, 16, 0, 1.1],
  [355, 257, 26, 6, 0, 1.9], [330, 264, 60, 8, 0, 0.8], [468, 188, 28, 7, -0.1, 2.3], [435, 180, 40, 8, 0, 0.8],
  [15, 247, 34, 10, 0.05, -1.3], [60, 250, 22, 6, 0, -1], [80, 220, 24, 5, -0.3, -1], [175, 235, 40, 6, 0.2, -0.9],
  [230, 242, 30, 5, 0.2, -0.8], [350, 235, 42, 7, 0, -1], [265, 254, 24, 5, 0, -0.7], [370, 187, 45, 7, 0, -1],
  [60, 188, 50, 5, 0, -0.3], [430, 199, 60, 3, 0, -0.8]
];

function drawDoppler() {
  const rnd = generator(21), n = lattice(11), m = lattice(5), s = lattice(17);
  const edges = Array.from({ length: 478 }, () => rnd());
  const runs = Array.from({ length: 478 }, () => ({ left: 0, c: black }));
  paint("doppler", (x, y) => {
    if (y > 264) return rnd() < 0.5 ? black : [0, 200, 0];
    const limit = 168 + edges[x] * 12 + n(x / 30, 1) * 8 - (x > 330 ? 4 : 0);
    if (y < limit && !(y > 160 && rnd() < (y - 158) / 30)) {
      const run = runs[x], column = edges[x] * 0.6 + s(x / 5, 2) * 0.4;
      if (run.left-- > 0) return run.c;
      run.left = Math.floor(rnd() * 3);
      const pick = rnd();
      if (pick < 0.14) { run.c = black; run.left = 0; }
      else if (pick < 0.2 + 0.72 * column) { run.c = [255, 10, 240]; run.left += 1; }
      else if (pick < 0.92) run.c = colour((rnd() - 0.5) * 7.5);
      else run.c = [150, 150, 130];
      return run.c;
    }
    const lean = y - x * 0.14;
    let v = -0.6 + (n(x / 26, lean / 6) - 0.5) * 1.2 + (m(x / 9, lean / 3) - 0.5) * 1.1;
    for (const [cx, cy, rx, ry, slope, strength] of BLOBS) {
      const dx = (x - cx) / rx, dy = (y - cy - (x - cx) * slope) / ry;
      v += strength * Math.exp(-(dx * dx + dy * dy));
    }
    if (y < 192) v += (192 - y) / 16 * (0.5 + 0.5 * rnd());
    return colour(Math.min(v + (rnd() - 0.5) * 0.35, 4.1));
  });
}

function graph(id, major, minor, points) {
  const canvas = document.getElementById(id), ctx = canvas.getContext("2d");
  const w = canvas.width, h = canvas.height;
  ctx.fillStyle = "#000";
  ctx.fillRect(0, 0, w, h);
  ctx.fillStyle = "#06300a";
  for (let x = 0; x < w; x += w / 48) ctx.fillRect(Math.round(x), 0, 1, h);
  for (let y = 0; y < h; y += minor) ctx.fillRect(0, Math.round(y), w, 1);
  ctx.fillStyle = "#125a18";
  for (let x = w / 6; x < w - 2; x += w / 6) ctx.fillRect(Math.round(x), 0, 1, h);
  for (let y = major; y < h; y += major) ctx.fillRect(0, Math.round(y), w, 1);
  ctx.strokeStyle = "#fff";
  ctx.lineWidth = 1.4;
  ctx.beginPath();
  points.forEach(([x, y]) => ctx.lineTo(x + 0.5, y + 0.5));
  ctx.stroke();
  return ctx;
}

function drawTraces() {
  const rnd = generator(99);
  const a = [[0, 89], [1, 89], [2, 36], [3, 33], [4, 37], [5, 31], [6, 34], [7, 29], [8, 33], [9, 29], [10, 35], [12, 38], [14, 50],
    [16, 60], [18, 72], [20, 70], [22, 79], [24, 77], [26, 84], [27, 82], [28, 57], [29, 66], [30, 84], [33, 89], [36, 87], [40, 90]];
  for (let x = 41; x < 313; x += 0.8) a.push([x, (x < 50 ? 91 : 95) + (rnd() - 0.5) * 7]);
  const ctx = graph("ascope", 24.6, 4.92, a);
  ctx.fillStyle = "#e8e05a";
  ctx.fillRect(217, 0, 1, 104);

  const v = [[0, 58], [1, 95], [2, 42], [6, 41], [8, 48], [10, 35], [11, 28], [14, 39], [16, 33], [18, 31], [20, 42], [22, 54], [24, 59],
    [26, 51], [28, 57], [30, 50], [32, 54], [34, 60], [36, 50], [38, 34], [40, 38], [42, 46], [44, 54], [46, 50], [48, 62], [50, 52]];
  // Returns to the middle between samples, which fills the band round zero.
  for (let x = 51; x < 308; x += 0.8) {
    const p = rnd();
    let y = 62 + (rnd() + rnd() - 1) * 36;
    if (p < 0.3) y = -4;
    else if (p < 0.335) y = 108;
    v.push([x, y], [x, 50 + rnd() * 6], [x, 66 + rnd() * 8]);
  }
  graph("velocity", 26, 5.2, v);
}

drawBackscatter();
drawDoppler();
drawTraces();
```
